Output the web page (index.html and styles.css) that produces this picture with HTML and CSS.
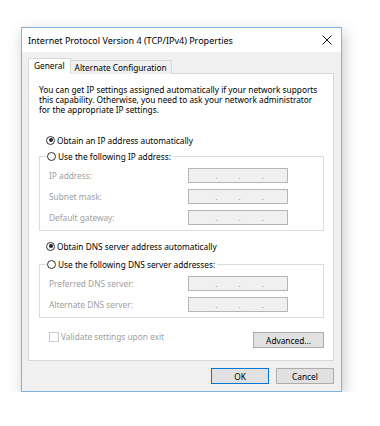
FILE: index.html
```html
<!DOCTYPE html>
<html lang="en">
<head>
    <meta charset="UTF-8">
    <meta name="viewport" content="width=device-width, initial-scale=1.0">
    <title>Internet Protocol Version 4 (TCP/IPv4) Properties</title>
    <link rel="stylesheet" href="styles.css">
</head>
<body>
    <div class="window">
        <div class="titlebar">
            <div class="title">Internet Protocol Version 4 (TCP/IPv4) Properties</div>
            <svg class="close" width="10" height="10" viewBox="0 0 10 10">
                <path d="M0.5 0.5 L9.5 9.5 M9.5 0.5 L0.5 9.5" stroke="#111" stroke-width="1" fill="none"/>
            </svg>
        </div>
        <div class="client">
            <div class="tabs">
                <div class="tab active">General</div>
                <div class="tab">Alternate Configuration</div>
            </div>
            <div class="panel">
                <p class="intro">You can get IP settings assigned automatically if your network supports this capability. Otherwise, you need to ask your network administrator for the appropriate IP settings.</p>

                <div class="option first"><span class="radio checked"></span>Obtain an IP address automatically</div>
                <fieldset class="group">
                    <legend class="option"><span class="radio"></span>Use the following IP address:</legend>
                    <div class="row"><span class="label">IP address:</span><span class="ipbox"><i>.</i><i>.</i><i>.</i></span></div>
                    <div class="row"><span class="label">Subnet mask:</span><span class="ipbox"><i>.</i><i>.</i><i>.</i></span></div>
                    <div class="row"><span class="label">Default gateway:</span><span class="ipbox"><i>.</i><i>.</i><i>.</i></span></div>
                </fieldset>

                <div class="option dns"><span class="radio checked"></span>Obtain DNS server address automatically</div>
                <fieldset class="group dns-group">
                    <legend class="option"><span class="radio"></span>Use the following DNS server addresses:</legend>
                    <div class="row"><span class="label">Preferred DNS server:</span><span class="ipbox"><i>.</i><i>.</i><i>.</i></span></div>
                    <div class="row"><span class="label">Alternate DNS server:</span><span class="ipbox"><i>.</i><i>.</i><i>.</i></span></div>
                </fieldset>

                <div class="bottom-row">
                    <div class="validate"><span class="checkbox"></span>Validate settings upon exit</div>
                    <button class="btn advanced">Advanced...</button>
                </div>
            </div>
            <div class="footer">
                <button class="btn default">OK</button>
                <button class="btn">Cancel</button>
            </div>
        </div>
    </div>
</body>
</html>
```

FILE: styles.css
```css
body {
    margin: 0;
    padding: 27px 0 0 21px;
    background-color: #ffffff;
    font-family: "Segoe UI", "Noto Sans", sans-serif;
    font-size: 8.3px;
    color: #000;
}
.window {
    width: 319px;
    height: 363px;
    border: 1px solid #7fb3e0;
    background-color: #f0f0f0;
    box-shadow: 2px 5px 14px rgba(0, 0, 0, 0.22);
    display: flex;
    flex-direction: column;
}
.titlebar {
    height: 24px;
    background-color: #fff;
    display: flex;
    align-items: center;
    justify-content: space-between;
    padding: 0 9px 0 6px;
}
.title {
    font-size: 9px;
}
.close {
    display: block;
}
.client {
    flex: 1;
    display: flex;
    flex-direction: column;
    padding: 6px 7px 0 6px;
}
.tabs {
    display: flex;
    height: 16px;
    align-items: flex-end;
    margin-bottom: -1px;
    position: relative;
    z-index: 1;
}
.tab {
    height: 13px;
    line-height: 13px;
    padding: 0 4px;
    border: 1px solid #d9d9d9;
    border-bottom: none;
    background-color: #f0f0f0;
}
.tab.active {
    height: 15px;
    line-height: 14px;
    background-color: #fff;
    padding: 0 5px;
}
.tab.active + .tab {
    border-left: none;
}
.panel {
    height: 286px;
    background-color: #fff;
    border: 1px solid #d9d9d9;
    padding: 0 9px 0 10px;
}
.intro {
    margin: 11px 0 0 0;
    line-height: 10px;
}
.option {
    display: flex;
    align-items: center;
    height: 12px;
}
.option.first {
    margin: 19px 0 0 7px;
}
.option.dns {
    margin: 9px 0 0 7px;
}
.radio {
    width: 9px;
    height: 9px;
    border: 1px solid #333;
    border-radius: 50%;
    margin-right: 2px;
    box-sizing: border-box;
    position: relative;
    background-color: #fff;
}
.radio.checked::after {
    content: "";
    position: absolute;
    left: 1.5px;
    top: 1.5px;
    width: 4px;
    height: 4px;
    border-radius: 50%;
    background-color: #222;
}
.group {
    margin: 4px 0 0 0;
    padding: 6px 9px 5px 9px;
    border: 1px solid #dcdcdc;
    width: 285px;
    box-sizing: border-box;
}
.dns-group {
    margin-top: 6px;
}
.group legend {
    padding: 0 2px 0 0;
    margin-left: -2px;
}
.row {
    display: flex;
    align-items: center;
    justify-content: space-between;
    height: 15px;
    margin-top: 6px;
    padding-right: 26px;
    color: #a0a0a0;
}
.row:first-of-type {
    margin-top: 0;
}
.ipbox {
    width: 100px;
    height: 15px;
    box-sizing: border-box;
    border: 1px solid #b5b5b5;
    background-color: #f0f0f0;
    display: flex;
    justify-content: center;
    gap: 21px;
    padding-left: 3px;
    line-height: 14px;
    color: #999;
}
.ipbox i {
    font-style: normal;
}
.bottom-row {
    display: flex;
    justify-content: space-between;
    align-items: flex-start;
    margin-top: 14px;
}
.validate {
    display: flex;
    align-items: center;
    color: #a0a0a0;
    margin: -1px 0 0 10px;
}
.checkbox {
    width: 10px;
    height: 10px;
    box-sizing: border-box;
    border: 1px solid #cccccc;
    margin-right: 2px;
}
.btn {
    font-family: inherit;
    font-size: 8.3px;
    background-color: #e1e1e1;
    border: 1px solid #adadad;
    height: 16px;
    padding: 0;
    color: #000;
}
.advanced {
    width: 71px;
}
.footer {
    display: flex;
    justify-content: flex-end;
    gap: 7px;
    margin-top: 7px;
}
.footer .btn {
    width: 58px;
}
.default {
    border: 1px solid #0078d7;
}
```
